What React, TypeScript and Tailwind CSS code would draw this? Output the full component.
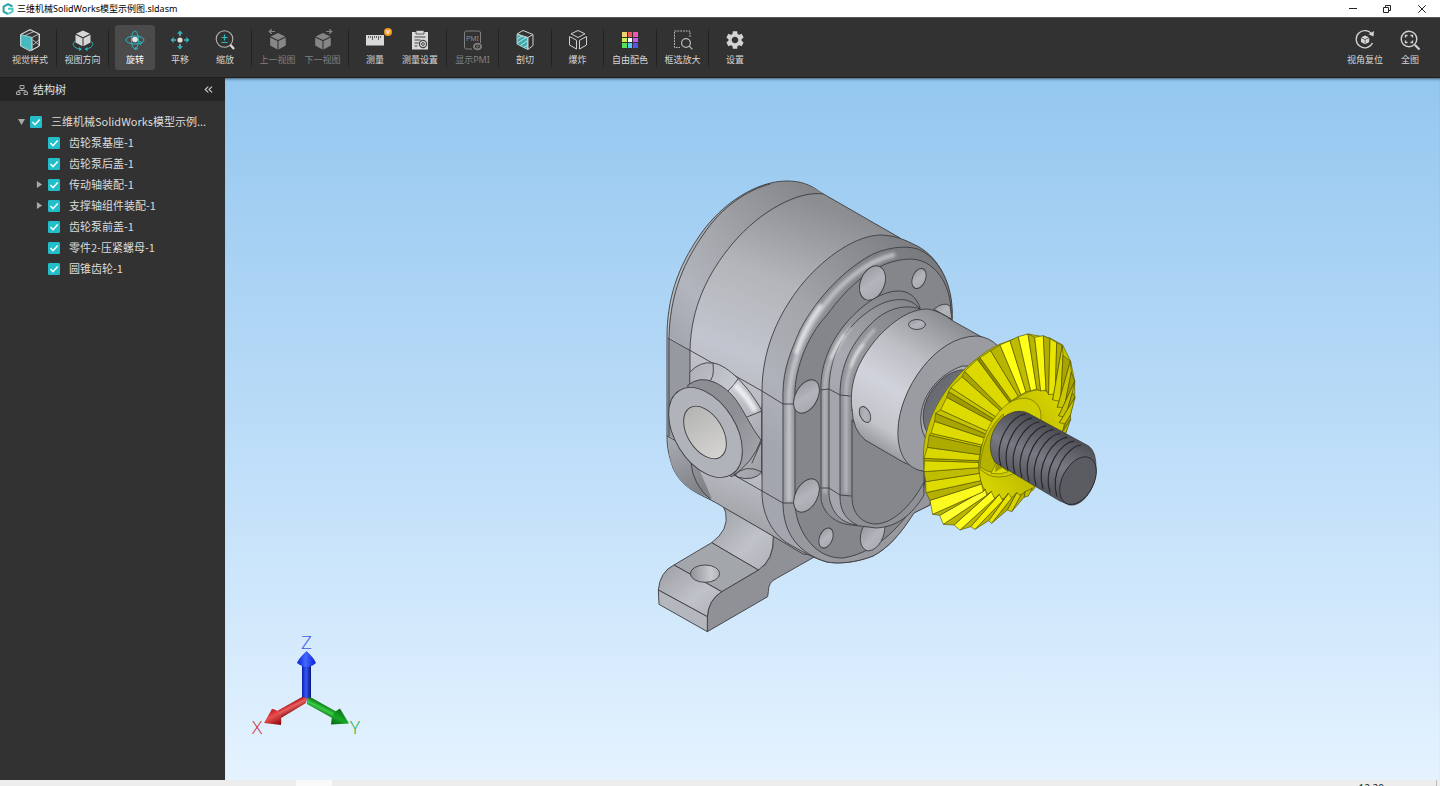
import React, { useState } from "react";
import clsx from "clsx";
import { ChevronsLeft } from "lucide-react";
import { MdSettings } from "react-icons/md";

interface Tool {
  id: string;
  label: string;
  icon: React.ReactNode;
  disabled?: boolean;
  vip?: boolean;
}

interface TreeNode {
  name: string;
  level: number;
  state?: "open" | "closed";
}

const TEAL = "#2bb8c0";

const StyleIcon = () => (
  <svg viewBox="0 0 24 24" className="size-[24px]" fill="none" strokeLinejoin="round">
    <path d="M2.500 6.500 12 1.500 21.500 6v12L12 23 2.500 18z" stroke="#d8d8d8" />
    <path d="M3 6.500 12 2l9 4-7 3.500z" fill="#333" stroke="#d8d8d8" strokeWidth=".8" />
    <path d="M3 7 14 9.500v13L3 18z" fill="#48b9bd" stroke="#7fd0d3" strokeWidth=".8" />
    <path d="m7 7.500 9-4M14 9.500V22l7-4V6M15 17l6-5M15 12l6 5" stroke="#d8d8d8" strokeWidth=".8" />
  </svg>
);

const Cube = ({ fill = "#d6d6d6" }: { fill?: string }) => (
  <g fill={fill}>
    <path d="m12 2.500 7 3.200-7 3.500-7-3.500z" />
    <path d="m4.500 6.700 7 3.500v8l-7-3.800z" />
    <path d="m19.500 6.700-7 3.500v8l7-3.800z" />
  </g>
);

const DirectionIcon = () => (
  <svg viewBox="0 0 24 24" className="size-[24px]" fill="none">
    <Cube />
    <path d="M4 13.500c-4 2.500-1 6.500 4.500 7.500M20 13.500c4 2.500 1 6.500-5 7.500" stroke={TEAL} />
    <path d="m8 19 3 2.200L8 23zM16.500 19l-3 2.200 3 1.800z" fill={TEAL} />
  </svg>
);

const RotateIcon = () => (
  <svg viewBox="0 0 24 24" className="size-[24px]" fill="none" stroke={TEAL}>
    <ellipse cx="12" cy="12" rx="9" ry="4" />
    <ellipse cx="12" cy="12" rx="3.500" ry="9" />
    <path d="m16 13.500 3 1-2 2.500M13 19l-1 2.500 3-1" />
    <circle cx="12" cy="11.500" r="2.800" fill="#e6e6e6" stroke="none" />
  </svg>
);

const PanIcon = () => (
  <svg viewBox="0 0 24 24" className="size-[24px]" fill="none">
    <circle cx="12" cy="12" r="2.600" fill="#ddd" />
    <path d="M12 5v3M12 16v3M5 12h3M16 12h3" stroke="#9ad9dc" strokeWidth="1.200" />
    <path d="m12 2.500 3 3.200H9zM12 21.500l3-3.200H9zM2.500 12l3.200-3v6zM21.500 12l-3.200-3v6z" fill={TEAL} />
  </svg>
);

const ZoomIcon = () => (
  <svg viewBox="0 0 24 24" className="size-[24px]" fill="none">
    <circle cx="11.500" cy="11" r="8.300" stroke="#b4b4b4" strokeWidth="1.100" />
    <path d="M8.500 9.500h6M11.500 6.500v6M8.500 14.500h6" stroke={TEAL} strokeWidth="1.200" />
    <path d="m17.500 17 3.500 4" stroke="#ddd" strokeWidth="2.200" />
  </svg>
);

const ViewStepIcon = ({ next }: { next?: boolean }) => (
  <svg viewBox="0 0 24 24" className="size-[24px]" fill="none">
    <g transform="translate(-.5 2.500) scale(1.040 1.040)">
      <Cube fill="#868686" />
    </g>
    <g transform={next ? "translate(24 0) scale(-1 1)" : undefined} stroke="#868686" strokeWidth="1.200">
      <path d="M3.500 3.500H9M5.800 1.300 3.300 3.500l2.500 2.300" />
    </g>
  </svg>
);

const RulerIcon = () => (
  <svg viewBox="0 0 24 24" className="size-[24px]">
    <rect x="3" y="7" width="18" height="10.500" fill="#d9d9d9" />
    <path d="M5.500 8V10M7.500 8V10M9.500 8V12M11.500 8V10M13.500 8V10M15.500 8V12M17.500 8V10" stroke="#444" strokeWidth=".8" />
  </svg>
);

const MeasureSettingIcon = () => (
  <svg viewBox="0 0 24 24" className="size-[24px]" fill="none">
    <path d="M4 4h16v17.500H4z" fill="#d9d9d9" />
    <path d="M8 2.500h8V6H8z" fill="#d9d9d9" stroke="#444" strokeWidth=".8" />
    <path d="M6.500 9h11M6.500 12h6M6.500 15h4M6.500 18h3" stroke="#444" />
    <circle cx="15" cy="16" r="3.600" stroke="#444" strokeWidth="1.200" />
    <circle cx="15" cy="16" r="1.400" stroke="#444" />
  </svg>
);

const PmiIcon = () => (
  <svg viewBox="0 0 24 24" className="size-[24px]" fill="none" stroke="#808080">
    <path d="M11 21H5.500q-2 0-2-2V5q0-2 2-2h12q2 0 2 2v10" />
    <text x="5" y="12.500" fontSize="7" fill="#8c8c8c" stroke="none">PMI</text>
    <ellipse cx="16.500" cy="18.500" rx="3.600" ry="2.800" strokeWidth="1.800" />
    <circle cx="16.500" cy="18.500" r=".8" />
  </svg>
);

const SectionIcon = () => (
  <svg viewBox="0 0 24 24" className="size-[24px]" fill="none" strokeLinejoin="round">
    <path d="M4 6 10 2.500 20 6.500V17.500L15 21.500V9.500z" stroke="#d0d0d0" />
    <path d="m15 9.500 5-3" stroke="#d0d0d0" />
    <path d="M4 6.500 14.500 10v11.500L4 16z" fill="#3fa9ad" stroke="#bfe4e5" strokeWidth=".8" />
    <path d="m4.500 11 4.500-3M4.500 15l8.500-5.500M7.500 17.500l6.500-4.500M11 19.500l3-2" stroke="#cdeeef" strokeWidth=".9" />
  </svg>
);

const ExplodeIcon = () => (
  <svg viewBox="0 0 24 24" className="size-[24px]" fill="none" stroke="#cfcfcf" strokeLinejoin="round">
    <path d="m12 2.500 7 3.300-7 3.700-7-3.700zM3.500 8.500l7 3.800V21l-7-4zM20.500 8.500l-7 3.800V21l7-4z" />
  </svg>
);

const PaletteIcon = () => (
  <div className="grid size-[16px] grid-cols-3 gap-px">
    {["#f0d070", "#ee5555", "#ee55b5", "#c8f050", "#ffffff", "#c45cf0", "#58e058", "#58c8f8", "#5555e8"].map((c) => (
      <span key={c} style={{ backgroundColor: c }} />
    ))}
  </div>
);

const BoxZoomIcon = () => (
  <svg viewBox="0 0 24 24" className="size-[24px]" fill="none" stroke="#bdbdbd">
    <path d="M19 9V3H3.500v16.500H9" strokeDasharray="1.800 1" />
    <circle cx="15" cy="15" r="4.400" strokeWidth="1.200" />
    <path d="m18.200 18.200 3.200 3.200" strokeWidth="1.200" />
  </svg>
);

const ResetIcon = () => (
  <svg viewBox="0 0 24 24" className="size-[24px]" fill="none">
    <path d="M19 6.500A8.600 8.600 0 1 0 19.500 15" stroke="#d2d2d2" strokeWidth="1.300" />
    <path d="m21 3-.5 5.500-5-2.200z" fill="#d2d2d2" />
    <g transform="translate(5.500 6.200) scale(.55)">
      <Cube />
    </g>
  </svg>
);

const FullIcon = () => (
  <svg viewBox="0 0 24 24" className="size-[24px]" fill="none" stroke="#d2d2d2">
    <circle cx="11" cy="11" r="7.800" strokeWidth="1.400" />
    <path d="M7.500 9.500v-2h2M12.500 7.500h2v2M14.500 12.500v2h-2M9.500 14.500h-2v-2" strokeWidth="1.300" />
    <path d="m17 17 4.500 4.500" strokeWidth="2.200" />
  </svg>
);

const groups: Tool[][] = [
  [{ id: "style", label: "视觉样式", icon: <StyleIcon /> }],
  [{ id: "direction", label: "视图方向", icon: <DirectionIcon /> }],
  [
    { id: "rotate", label: "旋转", icon: <RotateIcon /> },
    { id: "pan", label: "平移", icon: <PanIcon /> },
    { id: "zoom", label: "缩放", icon: <ZoomIcon /> },
  ],
  [
    { id: "prev", label: "上一视图", icon: <ViewStepIcon />, disabled: true },
    { id: "next", label: "下一视图", icon: <ViewStepIcon next />, disabled: true },
  ],
  [
    { id: "measure", label: "测量", icon: <RulerIcon />, vip: true },
    { id: "measure-setting", label: "测量设置", icon: <MeasureSettingIcon /> },
  ],
  [{ id: "pmi", label: "显示PMI", icon: <PmiIcon />, disabled: true }],
  [{ id: "section", label: "剖切", icon: <SectionIcon /> }],
  [{ id: "explode", label: "爆炸", icon: <ExplodeIcon /> }],
  [{ id: "palette", label: "自由配色", icon: <PaletteIcon /> }],
  [{ id: "box-zoom", label: "框选放大", icon: <BoxZoomIcon /> }],
  [{ id: "setting", label: "设置", icon: <MdSettings className="size-[22px] text-[#d2d2d2]" /> }],
];

const viewTools: Tool[] = [
  { id: "reset", label: "视角复位", icon: <ResetIcon /> },
  { id: "full", label: "全图", icon: <FullIcon /> },
];

const nodes: TreeNode[] = [
  { name: "三维机械SolidWorks模型示例...", level: 0, state: "open" },
  { name: "齿轮泵基座-1", level: 1 },
  { name: "齿轮泵后盖-1", level: 1 },
  { name: "传动轴装配-1", level: 1, state: "closed" },
  { name: "支撑轴组件装配-1", level: 1, state: "closed" },
  { name: "齿轮泵前盖-1", level: 1 },
  { name: "零件2-压紧螺母-1", level: 1 },
  { name: "圆锥齿轮-1", level: 1 },
];

// outer x, outer y, inner x, inner y, fill up to the next edge
const teeth: [number, number, number, number, string][] = [
  [385, 558, 397, 535, "#c4c000"],
  [372, 562, 375, 545, "#b8b400"],
  [335, 605, 362, 557, "#d8d400"],
  [322, 600, 350, 548, "#b0ac00"],
  [275, 640, 335, 564, "#e8e400"],
  [266, 632, 325, 550, "#b8b400"],
  [225, 658, 308, 572, "#f4f000"],
  [212, 650, 298, 553, "#bcb800"],
  [180, 660, 284, 566, "#ffff20"],
  [162, 645, 274, 545, "#bab600"],
  [130, 643, 260, 556, "#ffff30"],
  [119, 616, 256, 538, "#bab600"],
  [98, 613, 250, 545, "#fbf91e"],
  [90, 571, 245, 522, "#b4b000"],
  [78, 548, 242, 512, "#dedb00"],
  [77, 515, 238, 490, "#c0bd00"],
  [72, 485, 236, 473, "#dedb00"],
  [74, 452, 236, 457, "#bab700"],
  [72, 445, 236, 452, "#dad700"],
  [82, 412, 240, 434, "#aeab00"],
  [88, 375, 242, 410, "#d8d500"],
  [93, 370, 246, 405, "#dedb00"],
  [104, 334, 254, 384, "#a8a500"],
  [107, 310, 262, 374, "#c8c500"],
  [122, 300, 265, 365, "#dedb00"],
  [140, 262, 282, 338, "#9e9b00"],
  [146, 245, 286, 330, "#c8c500"],
  [152, 233, 290, 322, "#dcd900"],
  [186, 200, 304, 305, "#a8a500"],
  [194, 184, 309, 299, "#dcd900"],
  [232, 148, 329, 277, "#8f8c00"],
  [240, 143, 334, 272, "#dedb00"],
  [272, 122, 355, 259, "#b8b500"],
  [300, 105, 363, 254, "#ffff14"],
  [330, 92, 378, 246, "#bebb00"],
  [355, 80, 392, 242, "#ffff1c"],
  [384, 72, 410, 237, "#b8b500"],
  [404, 82, 422, 243, "#f8f510"],
  [430, 77, 438, 240, "#b2af00"],
  [450, 86, 446, 254, "#e8e500"],
  [470, 98, 466, 252, "#b0ad00"],
  [487, 106, 458, 270, "#d6d300"],
  [489, 136, 482, 274, "#a8a500"],
  [511, 154, 472, 292, "#cac700"],
  [514, 186, 493, 292, "#a5a200"],
  [524, 214, 476, 318, "#c6c300"],
  [517, 248, 496, 322, "#aaa700"],
  [525, 262, 478, 338, "#cac700"],
  [511, 316, 495, 342, "#aaa700"],
  [512, 328, 488, 364, "#b8b500"],
  [498, 368, 485, 375, "#b8b500"],
];

const PumpBody = () => (
  <g stroke="#3c3d40" strokeWidth=".9" strokeLinejoin="round" strokeLinecap="round" fill="none">
    {/* silhouette */}
    <path
      fill="url(#body)"
      d="M667 337C667 300 677 268 700 235C722 203 757 181 787 181C799 181 810 184 820 192L900 238L925 265V500L855 560L803 554L773 536L723 507C703 494 684 492 673 468C669 456 667 448 667 436Z"
    />
    <path
      fill="url(#rim)"
      stroke="none"
      d="M669 337C669 300 679 268 702 235C724 203 759 182 787 182C799 182 812 185 823 194C799 194 760 211 733 243C707 274 691 308 690 350Z"
    />
    <path fill="#9799a0" stroke="none" d="M668 338L690 350V445L668 436Z" />
    <path fill="url(#lower)" stroke="none" d="M668 437L690 448L712 499C700 493 684 492 673 468Q668 455 668 437Z" />
    <path d="M669 436V337C670 300 680 268 703 235C722 206 748 190 770 184" />
    <path d="M690 372V350C691 308 707 274 733 243C760 211 799 190 823 194" />
    <path d="M691 463Q693 485 710 499M667 436L678 442" />
    <path d="M668 338L762 391L783 404H793" />

    {/* side port */}
    <path fill="url(#tube)" d="M690 372Q700 361 713 363C728 365 749 387 762 411V472Q753 482 737 477L690 396Z" />
    <path d="M713 363Q715 380 708 382M738 379Q734 385 728 391M762 411L747 417M762 472Q745 463 734 476" />
    <path stroke="#f7f8fb" strokeWidth="6" opacity=".8" filter="url(#glow)" d="M737 387Q748 398 754 409" />
    <path fill="url(#flange)" d="M688 385Q699 376 714 382C740 394 742 415 761 440Q753 463 731 477L691 402Z" />
    <path d="M762 405V475M762 440L752 463" />
    <ellipse cx="705.500" cy="432.500" rx="49.500" ry="30.500" transform="rotate(58 705.500 432.500)" fill="#b1b3ba" />
    <ellipse cx="705" cy="432.500" rx="29" ry="17.500" transform="rotate(58 705 432.500)" fill="url(#port)" />
    <path d="M734 475L783 503H794" />

    {/* front cover */}
    <path
      fill="url(#cover)"
      d="M762 391C762 353 776 316 803 283C827 255 856 236 880 235C890 235 902 238 913 244C937 254 952 281 952 317L930 505L913 513C900 535 888 548 873 556C855 563 838 564 827 562C812 558 800 550 787 543C771 532 762 513 762 493Z"
    />
    <path
      fill="url(#fillet)"
      d="M783 404C782 374 787 360 800 330C817 297 846 268 873 254C891 246 912 245 922 251C943 262 954 291 952 320L930 505L914 513C900 535 888 548 873 556C855 563 838 564 827 562C800 554 783 535 783 503Z"
    />
    <g filter="url(#glow)" stroke="#d2d4da">
      <path strokeWidth="5" opacity=".7" d="M789 500V404C789 370 800 338 822 308C842 281 868 261 893 255" />
      <path stroke="#f8f9fb" strokeWidth="4" opacity=".7" d="M796 352Q804 327 820 306" />
    </g>
    <path
      fill="#85868a"
      d="M795 400C793 374 806 337 827 315C848 286 876 260 910 259C935 259 951 285 951 312L923 493C904 522 880 552 843 558C812 559 795 526 795 503Z"
    />
    <path d="M762 391L783 404H794M762 491L783 503H794" />

    {/* bolt holes */}
    <g fill="url(#hole)">
      <ellipse cx="872.500" cy="283" rx="12" ry="18" transform="rotate(22 872.500 283)" />
      <ellipse cx="919" cy="278.500" rx="6.500" ry="10.500" transform="rotate(22 919 278.500)" />
      <path d="M934 309Q944 301 950 306L952 319Z" />
      <ellipse cx="806.500" cy="396.500" rx="11" ry="18" transform="rotate(28 806.500 396.500)" />
      <ellipse cx="806.500" cy="495.500" rx="11" ry="18" transform="rotate(28 806.500 495.500)" />
      <ellipse cx="826" cy="538" rx="6.500" ry="10.500" transform="rotate(22 826 538)" />
      <path d="M863 527C858 538 860 549 868 551C880 550 885 535 885 526Z" />
    </g>

    {/* raised track */}
    <path
      fill="url(#track)"
      d="M821 390C820 361 834 337 847 322C864 303 881 292 897 291C909 290 917 298 920 308L924 495C912 515 897 527 876 528Q861 526 852 525C833 524 821 510 821 497Z"
    />
    <path fill="url(#trackTop)" d="M829 390C829 350 850 325 865 314C882 300 905 294 917 306L920 309C906 304 889 308 875 320C852 341 840 365 840 395V497C840 512 847 520 857 525C837 523 829 506 829 493Z" />
    <g filter="url(#glow)" stroke="#cfd1d7">
      <path strokeWidth="3" opacity=".7" d="M825 492V390C825 365 836 345 850 328M846 492V395C846 370 856 350 874 330" />
      <path stroke="#f8f9fb" strokeWidth="3" opacity=".7" d="M831 358Q836 346 844 335M851 366Q855 354 863 345" />
    </g>
    <path d="M821 390L829 389L840 395L850 396M821 488L829 488L840 495L851 496" />
    <path fill="#86878b" d="M852 420V497C852 513 861 523 875 524C895 524 914 501 924 482V465L860 430Z" />

    {/* collar */}
    <path
      fill="url(#collar)"
      d="M852 410C848 378 862 356 878 337C896 318 912 309 928 309Q940 311 953 321L996 345L960 440L923 471L903 462L865 440Q853 430 852 410Z"
    />
    <ellipse cx="917" cy="324.500" rx="8.500" ry="5" fill="url(#hole)" />
    <ellipse cx="865" cy="414.500" rx="5" ry="8.500" transform="rotate(-25 865 414.500)" fill="url(#hole)" />
    <path fill="#9b9ca2" d="M923 471C905 469 897 450 898 430C899 390 935 336 977 336Q989 337 998 346L970 470Z" />
    <path fill="#a8aab0" d="M928 442C911 420 924 380 962 366H972L940 440Z" />
    <path fill="url(#bore)" d="M927 432C914 410 935 374 961 370L970 370L935 432Z" />
  </g>
);

const Foot = () => (
  <g transform="translate(640 340) scale(.33333)" stroke="#3c3d40" strokeWidth="2.700" strokeLinejoin="round">
    <path fill="#909197" d="M202 875V830Q205 780 245 755L355 690Q402 665 400 590L430 550H540L560 630L410 715Q385 725 385 755L383 770Z" />
    <path fill="url(#neck)" d="M250 500L400 588Q402 660 355 690L215 608Q268 570 257 517Z" />
    <path fill="#a3a6ab" d="M215 608L355 690L245 755L102 675Z" />
    <path fill="url(#neck)" d="M102 675L245 755Q205 780 202 830L55 750Q60 695 102 675Z" />
    <path fill="#b5b7be" d="M55 750L202 830V875L57 793Z" />
    <ellipse cx="195" cy="701" rx="44" ry="26" fill="url(#bolt)" />
  </g>
);

const BevelGear = () => (
  <g transform="translate(900 310) scale(.33333)" strokeLinejoin="round">
    <path
      fill="#c8c400"
      stroke="#5f5d00"
      strokeWidth="2"
      d="M72 480C64 400 82 330 125 262C170 190 240 130 300 102L385 72L450 84L488 105L512 154L524 214V262L498 368L400 540L275 620L150 600Z"
    />
    <path fill="url(#cone)" stroke="#6a6800" strokeWidth="2" d="M236 460C238 400 270 345 300 308C335 270 380 240 415 240C460 240 496 280 496 320C490 390 440 500 397 535C360 560 320 570 290 565C250 555 235 510 236 460Z" />
    {teeth.slice(0, -1).map((t, i) => {
      const n = teeth[i + 1];
      return (
        <polygon
          key={i}
          points={`${t[0]},${t[1]} ${n[0]},${n[1]} ${n[2]},${n[3]} ${t[2]},${t[3]}`}
          fill={t[4]}
          stroke="#4a4900"
          strokeWidth="1.800"
        />
      );
    })}
    {/* hub */}
    <path fill="#d2cf00" stroke="#6a6800" strokeWidth="2" d="M322 282Q350 262 380 265C415 272 430 305 420 338L340 492Q290 510 262 493L240 478C235 390 275 320 322 282Z" />
    <path fill="#b5b200" stroke="#6a6800" strokeWidth="2" d="M240 470C246 400 268 350 310 312L330 480Q275 500 240 470Z" />
    <path fill="#dedb00" stroke="#6a6800" strokeWidth="2" d="M273 490L288 460L325 485L300 492Z" />
    <path fill="#9a9700" d="M287 462L310 472L285 486Z" />
    {/* threaded shaft */}
    <path
      fill="url(#shaft)"
      stroke="#303136"
      strokeWidth="2"
      d="M285 457C262 420 268 370 300 332C325 305 360 297 385 310L566 408Q590 425 588 480C584 545 545 590 508 585L478 572Z"
    />
    <g fill="none" stroke="#26272c" strokeWidth="3.500">
      {[0, 1, 2, 3, 4, 5, 6, 7, 8].map((k) => (
        <path key={k} transform={`translate(${k * 21} ${k * 11.500})`} d="M376 313C335 315 280 395 303 468" />
      ))}
    </g>
    <ellipse cx="534" cy="512" rx="77" ry="47" transform="rotate(-62 534 512)" fill="#5b5c61" stroke="#26272b" strokeWidth="2.500" />
  </g>
);

const PumpModel = () => (
  <svg viewBox="225 78 1215 702" className="block h-full w-full" role="img" aria-label="齿轮泵">
    <defs>
      <filter id="glow" x="-50%" y="-50%" width="200%" height="200%">
        <feGaussianBlur stdDeviation="1.500" />
      </filter>
      <linearGradient id="body" gradientUnits="userSpaceOnUse" x1="850" y1="215" x2="720" y2="540">
        <stop offset="0" stopColor="#8c8d91" />
        <stop offset=".25" stopColor="#b3b5b8" />
        <stop offset=".48" stopColor="#c2c5cf" />
        <stop offset=".6" stopColor="#b9bcc0" />
        <stop offset=".8" stopColor="#b9bcc3" />
        <stop offset=".92" stopColor="#a4a6ab" />
        <stop offset="1" stopColor="#8f9196" />
      </linearGradient>
      <linearGradient id="lower" x1="0" y1="0" x2=".3" y2="1">
        <stop offset="0" stopColor="#a9acb3" />
        <stop offset="1" stopColor="#808287" />
      </linearGradient>
      <linearGradient id="rim" x1="1" y1="0" x2="0" y2="1">
        <stop offset="0" stopColor="#808185" />
        <stop offset=".5" stopColor="#a4a6ab" />
        <stop offset=".75" stopColor="#b2b5bd" />
        <stop offset="1" stopColor="#a0a3ab" />
      </linearGradient>
      <linearGradient id="cover" gradientUnits="userSpaceOnUse" x1="930" y1="240" x2="762" y2="440">
        <stop offset="0" stopColor="#78797d" />
        <stop offset=".5" stopColor="#a3a5a9" />
        <stop offset=".8" stopColor="#afb2ba" />
        <stop offset="1" stopColor="#a3a6ae" />
      </linearGradient>
      <linearGradient id="fillet" gradientUnits="userSpaceOnUse" x1="940" y1="260" x2="785" y2="440">
        <stop offset="0" stopColor="#78797d" />
        <stop offset=".5" stopColor="#8e9094" />
        <stop offset="1" stopColor="#97999f" />
      </linearGradient>
      <linearGradient id="track" gradientUnits="userSpaceOnUse" x1="920" y1="295" x2="825" y2="400">
        <stop offset="0" stopColor="#7e7f83" />
        <stop offset=".6" stopColor="#97999d" />
        <stop offset="1" stopColor="#8e9095" />
      </linearGradient>
      <linearGradient id="trackTop" gradientUnits="userSpaceOnUse" x1="920" y1="295" x2="835" y2="400">
        <stop offset="0" stopColor="#808185" />
        <stop offset=".7" stopColor="#a8abb1" />
        <stop offset="1" stopColor="#a3a6ad" />
      </linearGradient>
      <linearGradient id="tube" x1="0" y1="0" x2="1" y2="1">
        <stop offset="0" stopColor="#adafb5" />
        <stop offset=".4" stopColor="#c6c9d0" />
        <stop offset="1" stopColor="#9c9ea4" />
      </linearGradient>
      <linearGradient id="flange" x1="0" y1="0" x2="1" y2="1">
        <stop offset="0" stopColor="#8c8e93" />
        <stop offset=".5" stopColor="#8d8f94" />
        <stop offset="1" stopColor="#a9abb0" />
      </linearGradient>
      <linearGradient id="port" x1="0" y1="0" x2="1" y2="0">
        <stop offset="0" stopColor="#b5b5b4" />
        <stop offset="1" stopColor="#d4d3d0" />
      </linearGradient>
      <linearGradient id="hole" x1="0" y1="0" x2="1" y2="1">
        <stop offset="0" stopColor="#94969b" />
        <stop offset=".5" stopColor="#b3b5bc" />
        <stop offset="1" stopColor="#a3a5aa" />
      </linearGradient>
      <linearGradient id="collar" gradientUnits="userSpaceOnUse" x1="965" y1="325" x2="885" y2="455">
        <stop offset="0" stopColor="#8a8b90" />
        <stop offset=".35" stopColor="#bebfc5" />
        <stop offset=".6" stopColor="#d1d3dc" />
        <stop offset=".85" stopColor="#c4c5ca" />
        <stop offset="1" stopColor="#94959a" />
      </linearGradient>
      <linearGradient id="bore" x1="0" y1="0" x2="1" y2="1">
        <stop offset="0" stopColor="#5d5f65" />
        <stop offset="1" stopColor="#82848d" />
      </linearGradient>
      <linearGradient id="neck" x1="0" y1="0" x2="1" y2="1">
        <stop offset="0" stopColor="#9c9ea4" />
        <stop offset=".6" stopColor="#c0c2c9" />
        <stop offset="1" stopColor="#afb1b7" />
      </linearGradient>
      <linearGradient id="bolt" x1="0" y1="0" x2="1" y2="0">
        <stop offset="0" stopColor="#8f9196" />
        <stop offset=".7" stopColor="#c8cad0" />
        <stop offset="1" stopColor="#b0b2b8" />
      </linearGradient>
      <linearGradient id="cone" x1="0" y1="1" x2="1" y2="0">
        <stop offset="0" stopColor="#dedb00" />
        <stop offset=".5" stopColor="#b5b200" />
        <stop offset="1" stopColor="#dedb00" />
      </linearGradient>
      <linearGradient id="shaft" gradientUnits="userSpaceOnUse" x1="460" y1="350" x2="385" y2="515">
        <stop offset="0" stopColor="#4a4b50" />
        <stop offset=".55" stopColor="#787a83" />
        <stop offset="1" stopColor="#56575d" />
      </linearGradient>
    </defs>
    <Foot />
    <PumpBody />
    <BevelGear />
  </svg>
);

const AxisTriad = () => (
  <svg viewBox="0 0 150 130" className="absolute bottom-[30px] left-[5px] h-[130px] w-[150px]" role="img" aria-label="坐标轴">
    <defs>
      <linearGradient id="axisZ">
        <stop offset="0" stopColor="#0a1fb0" />
        <stop offset=".45" stopColor="#3558f8" />
        <stop offset="1" stopColor="#0a1480" />
      </linearGradient>
      <linearGradient id="coneZ">
        <stop offset="0" stopColor="#0a20d8" />
        <stop offset=".45" stopColor="#4468ff" />
        <stop offset="1" stopColor="#0a1ed0" />
      </linearGradient>
      <linearGradient id="axisX" gradientUnits="userSpaceOnUse" x1="57" y1="84" x2="62" y2="94">
        <stop offset="0" stopColor="#9c0a0a" />
        <stop offset=".4" stopColor="#f06060" />
        <stop offset="1" stopColor="#700808" />
      </linearGradient>
      <linearGradient id="coneX" gradientUnits="userSpaceOnUse" x1="40" y1="90" x2="48" y2="105">
        <stop offset="0" stopColor="#c01414" />
        <stop offset=".4" stopColor="#e85050" />
        <stop offset="1" stopColor="#900a0a" />
      </linearGradient>
      <linearGradient id="axisY" gradientUnits="userSpaceOnUse" x1="95" y1="84" x2="90" y2="94">
        <stop offset="0" stopColor="#086810" />
        <stop offset=".5" stopColor="#38d045" />
        <stop offset="1" stopColor="#06500c" />
      </linearGradient>
      <linearGradient id="coneY" gradientUnits="userSpaceOnUse" x1="110" y1="90" x2="103" y2="105">
        <stop offset="0" stopColor="#0a7814" />
        <stop offset=".5" stopColor="#18a826" />
        <stop offset="1" stopColor="#086010" />
      </linearGradient>
    </defs>
    <path d="M72 46h9v33q-4 3-9 0z" fill="url(#axisZ)" />
    <path d="M76.500 31Q84 38 86 43Q77 51 67 43Q69 38 76.500 31z" fill="url(#coneZ)" />
    <path d="M72 77l5 1-1 5-25 15-4-7z" fill="url(#axisX)" />
    <path d="M34 103l8-14q11 1 9 16z" fill="url(#coneX)" />
    <path d="M77 78q4-1 5 0l25 14-3 7-27-15z" fill="url(#axisY)" />
    <path d="M119 103.500l-9-15q-9 4-9 16z" fill="url(#coneY)" />
    <g fontFamily="Open Sans, sans-serif" fontSize="19" fontWeight="300" textAnchor="middle">
      <text x="76.500" y="29" fill="#4058e8">Z</text>
      <text x="27" y="114" fill="#d03038">X</text>
      <text x="125" y="114" fill="#20a838">Y</text>
    </g>
  </svg>
);

const ToolButton = ({ tool, active, onSelect }: { tool: Tool; active?: boolean; onSelect?: () => void }) => (
  <button
    type="button"
    disabled={tool.disabled}
    onClick={onSelect}
    className={clsx(
      "relative flex h-[45px] w-10 flex-col items-center rounded-[3px] pt-[3px] whitespace-nowrap",
      active ? "bg-[#4b4b4b] text-white" : tool.disabled ? "text-[#808080]" : "text-[#d8d8d8]"
    )}
  >
    <span className="flex h-[24px] items-center justify-center">{tool.icon}</span>
    <span className="flex h-[14px] items-center text-[9px] leading-none">{tool.label}</span>
    {tool.vip && (
      <span className="absolute top-[3px] right-[3px] flex size-[8px] items-center justify-center rounded-full bg-[#f39c1f] text-[6px] leading-none font-bold text-white">
        V
      </span>
    )}
  </button>
);

const TreeRow = ({ node }: { node: TreeNode }) => {
  const [checked, setChecked] = useState(true);

  return (
    <li className={clsx("flex h-[21px] items-center", node.level === 0 ? "pl-[15px]" : "pl-[33px]")}>
      {node.state ? (
        <button type="button" aria-label="展开/折叠" className="flex w-[12px] justify-center text-[#a8a8a8]">
          <svg viewBox="0 0 8 8" className="size-[7px]" fill="currentColor">
            {node.state === "open" ? <path d="M0 1h8L4 8z" /> : <path d="M1 0v8l6-4z" />}
          </svg>
        </button>
      ) : (
        <span className="w-[12px]" />
      )}
      <label className="ml-[3px] flex items-center font-['Noto_Sans_CJK_SC',sans-serif] text-[11px] leading-none whitespace-nowrap text-[#dcdcdc]">
        <span className="relative mr-[9px] size-[12px]">
          <input
            type="checkbox"
            checked={checked}
            onChange={() => setChecked(!checked)}
            className="block size-[12px] appearance-none rounded-[1px] border border-[#22bfca] bg-transparent checked:bg-[#22bfca]"
          />
          {checked && (
            <svg viewBox="0 0 12 12" className="pointer-events-none absolute inset-0 size-[12px]" fill="none" stroke="#fff" strokeWidth="1.500">
              <path d="m2.500 6 2.500 2.700L9.700 3.500" />
            </svg>
          )}
        </span>
        {node.name}
      </label>
    </li>
  );
};

export default function App() {
  const [activeTool, setActiveTool] = useState("rotate");

  return (
    <div className="flex h-screen flex-col overflow-hidden bg-[#323232] font-['Noto_Sans','Noto_Sans_CJK_SC',sans-serif]">
      <header className="flex h-[17px] shrink-0 items-center bg-white pl-[2px] text-black">
        <svg viewBox="0 0 12 12" className="size-[12px]" fill="none" strokeWidth="2">
          <path d="M10.500 3.500 6 1.200 1.600 3.600v5L6 11" stroke="#2aa3a5" />
          <path d="M6 11l4.500-2.500V5.800H6" stroke="#45c9c4" />
        </svg>
        <h1 className="ml-[3px] text-[9px] leading-none">三维机械SolidWorks模型示例图.sldasm</h1>
        <div className="ml-auto flex h-full items-center">
          <button type="button" aria-label="最小化" className="flex h-full w-[34px] items-center justify-center">
            <svg viewBox="0 0 8 8" className="size-[8px]" stroke="#222"><path d="M0 3.500h8" /></svg>
          </button>
          <button type="button" aria-label="还原" className="flex h-full w-[34px] items-center justify-center">
            <svg viewBox="0 0 8 8" className="size-[8px]" stroke="#222" fill="none"><path d="M.5 2.500h5v5h-5zM2.500 2.500v-2h5v5h-2" /></svg>
          </button>
          <button type="button" aria-label="关闭" className="flex h-full w-[36px] items-center justify-center">
            <svg viewBox="0 0 8 8" className="size-[8px]" stroke="#222"><path d="m.3.300 7.400 7.400M7.700.300.300 7.700" /></svg>
          </button>
        </div>
      </header>

      <nav className="flex h-[61px] shrink-0 items-center justify-between border-t border-b border-t-[#5a5a5a] border-b-[#1f1f1f] bg-[#323232] px-[10px]">
        <div className="flex w-[745px] items-center justify-between">
          {groups.map((group, i) => (
            <React.Fragment key={group[0].id}>
              {i > 0 && <span className="h-[38px] w-px bg-[#222]" />}
              <div className="flex gap-[5px]">
                {group.map((tool) => (
                  <ToolButton key={tool.id} tool={tool} active={activeTool === tool.id} onSelect={() => setActiveTool(tool.id)} />
                ))}
              </div>
            </React.Fragment>
          ))}
        </div>
        <div className="flex gap-[5px]">
          {viewTools.map((tool) => (
            <ToolButton key={tool.id} tool={tool} />
          ))}
        </div>
      </nav>

      <div className="flex min-h-0 flex-1">
        <aside className="w-[225px] shrink-0 bg-[#323232]">
          <div className="flex h-[23px] items-center bg-[#252525] pr-[10px] pl-[16px] text-[#e0e0e0]">
            <svg viewBox="0 0 12 12" className="size-[12px]" fill="none" stroke="#a8a8a8">
              <path d="M4 1.500h4v3H4zM.5 8h3.500v2.500H.5zM8 8h3.500v2.500H8zM6 4.500v2M2.200 8V6.500h7.600V8" />
            </svg>
            <h2 className="ml-[5px] text-[11px] leading-none">结构树</h2>
            <button type="button" aria-label="收起" className="ml-auto text-[#c8c8c8]">
              <ChevronsLeft className="size-[13px]" />
            </button>
          </div>
          <ul className="pt-[10px]">
            {nodes.map((node) => (
              <TreeRow key={node.name} node={node} />
            ))}
          </ul>
        </aside>

        <main className="relative min-w-0 flex-1 bg-linear-to-b from-[#94c7ef] via-[#bbdcf8] to-[#e5f3ff] shadow-[inset_0_3px_3px_-2px_#3f5a6e]">
          <PumpModel />
          <AxisTriad />
        </main>
      </div>

      <footer className="flex h-[6px] shrink-0 overflow-hidden bg-[#ededed]">
        <span className="ml-[296px] w-[36px] bg-[#f9f9f9]" />
        <time className="mt-[2px] mr-[52px] ml-auto text-[10px] leading-[12px] text-[#222]">12:20</time>
        <span className="mr-[3px] w-px bg-[#bbb]" />
      </footer>
    </div>
  );
}
